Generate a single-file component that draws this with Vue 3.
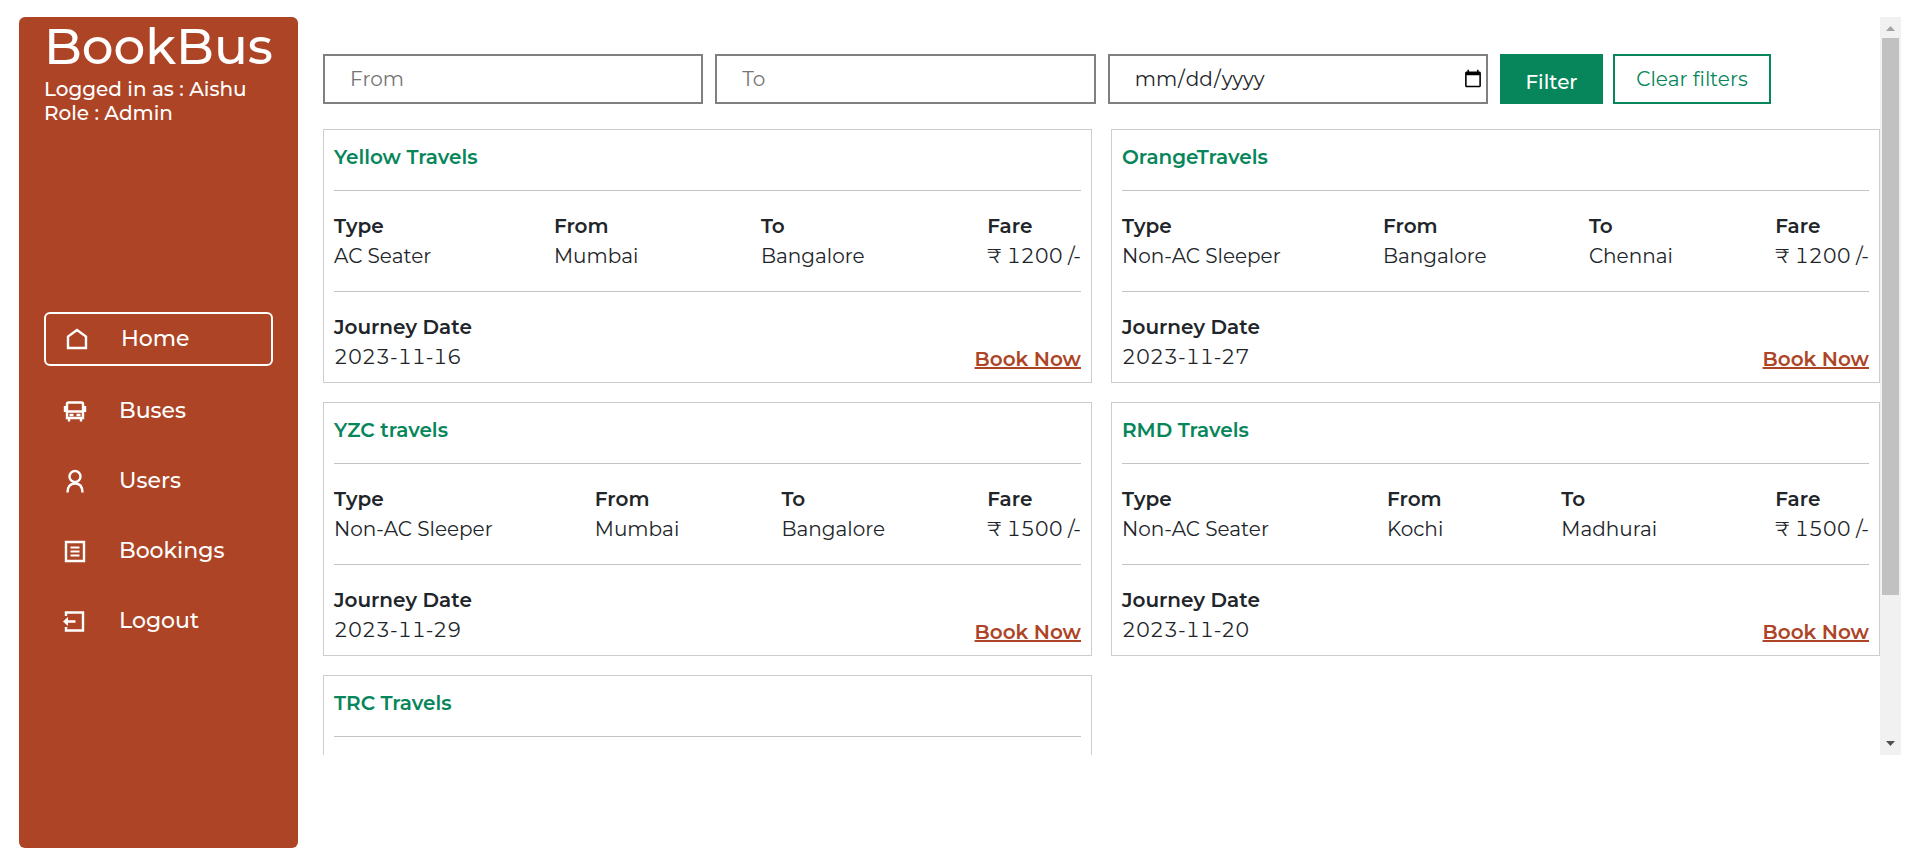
<script setup>
import { ref } from 'vue'

const from = ref('')
const to = ref('')
const date = ref('')

const links = [
  { icon: 'home', label: 'Home', active: true },
  { icon: 'bus', label: 'Buses' },
  { icon: 'user', label: 'Users' },
  { icon: 'list', label: 'Bookings' },
  { icon: 'logout', label: 'Logout' },
]

const buses = [
  { name: 'Yellow Travels', type: 'AC Seater', from: 'Mumbai', to: 'Bangalore', fare: 1200, date: '2023-11-16' },
  { name: 'OrangeTravels', type: 'Non-AC Sleeper', from: 'Bangalore', to: 'Chennai', fare: 1200, date: '2023-11-27' },
  { name: 'YZC travels', type: 'Non-AC Sleeper', from: 'Mumbai', to: 'Bangalore', fare: 1500, date: '2023-11-29' },
  { name: 'RMD Travels', type: 'Non-AC Seater', from: 'Kochi', to: 'Madhurai', fare: 1500, date: '2023-11-20' },
  { name: 'TRC Travels' },
]

function clearFilters() {
  from.value = ''
  to.value = ''
  date.value = ''
}
</script>

<template>
  <div class="layout">
    <aside class="sidebar">
      <h1 class="brand">BookBus</h1>
      <p class="info">Logged in as : Aishu</p>
      <p class="info">Role : Admin</p>
      <nav class="nav">
        <a v-for="l in links" :key="l.label" href="#" class="link" :class="{ active: l.active }">
          <svg class="icon" viewBox="0 0 26 26" fill="none" stroke="currentColor" stroke-width="2.4" aria-hidden="true">
            <path v-if="l.icon === 'home'" d="M4 22V10.5L13 4l9 6.5V22Z" />
            <template v-else-if="l.icon === 'bus'">
              <path d="M5 20V6q0-1.500 1.500-1.500h13q1.500 0 1.500 1.500v14ZM5 13.500h16" />
              <path d="M3 8v6M23 8v6M7 20v3.500M19 20v3.500" />
              <path d="M7.500 17h4M14.500 17h4" />
            </template>
            <template v-else-if="l.icon === 'user'">
              <circle cx="13" cy="8.5" r="5.5" />
              <path d="M5.500 24.500q0-9 7.500-9t7.500 9" />
            </template>
            <template v-else-if="l.icon === 'list'">
              <path d="M4 4h18v19H4Z" />
              <path d="M8.500 9.500h9M8.500 13.500h9M8.500 17.500h9" stroke-width="2" />
            </template>
            <template v-else>
              <path d="M4 8V4.500h17v18H4V19M5 13.500h8.500" />
              <path d="M6 9v9l-5-4.500Z" fill="currentColor" stroke="none" />
            </template>
          </svg>
          <span>{{ l.label }}</span>
        </a>
      </nav>
    </aside>

    <div class="panel">
      <main class="content">
        <form class="filters" @submit.prevent>
          <input v-model="from" class="field" type="text" placeholder="From" aria-label="From" />
          <input v-model="to" class="field" type="text" placeholder="To" aria-label="To" />
          <input v-model="date" class="field date" type="date" aria-label="Journey date" />
          <div class="actions">
            <button class="btn solid" type="submit">Filter</button>
            <button class="btn" type="button" @click="clearFilters">Clear filters</button>
          </div>
        </form>

        <section class="cards">
          <article v-for="b in buses" :key="b.name" class="card">
            <h2 class="name">{{ b.name }}</h2>
            <dl v-if="b.type" class="details">
              <div><dt>Type</dt><dd>{{ b.type }}</dd></div>
              <div><dt>From</dt><dd>{{ b.from }}</dd></div>
              <div><dt>To</dt><dd>{{ b.to }}</dd></div>
              <div><dt>Fare</dt><dd>₹ {{ b.fare }} /-</dd></div>
            </dl>
            <div v-if="b.date" class="footer">
              <dl class="journey">
                <dt>Journey Date</dt>
                <dd>{{ b.date }}</dd>
              </dl>
              <a href="#" class="book">Book Now</a>
            </div>
          </article>
        </section>
      </main>
      <div class="scrollbar" aria-hidden="true">
        <svg class="arrow up" viewBox="0 0 21 21"><path d="M6 14l4.500-5 4.500 5z" /></svg>
        <div class="track"><div class="thumb"></div></div>
        <svg class="arrow" viewBox="0 0 21 21"><path d="M6 7l4.500 5 4.500-5z" /></svg>
      </div>
    </div>
  </div>
</template>

<style>
body {
  margin: 0;
  background: #fff;
}
</style>

<style scoped>
.layout,
.layout * {
  box-sizing: border-box;
}
.layout {
  display: flex;
  gap: 25px;
  height: 100vh;
  padding: 17px 19px 15px;
  font-family: Montserrat, Inter, "Noto Sans", sans-serif;
  font-size: 20px;
  line-height: 30px;
  color: #212529;
}
.sidebar {
  flex: none;
  display: flex;
  flex-direction: column;
  width: 279px;
  padding: 0 25px 13px;
  border-radius: 6px;
  background: #ad4426;
  color: #fff;
  font-weight: 500;
}
.brand {
  margin: 0;
  font-size: 50px;
  font-weight: 500;
  line-height: 60px;
}
.info {
  margin: 0;
  line-height: 24px;
}
.nav {
  display: flex;
  flex-direction: column;
  gap: 16px;
  margin: auto 0;
}
.link {
  display: flex;
  align-items: center;
  gap: 31px;
  height: 54px;
  padding: 0 18px;
  color: #fff;
  font-size: 22px;
  text-decoration: none;
}
.link.active {
  margin-bottom: 2px;
  border: 2px solid #fff;
  border-radius: 6px;
}
.icon {
  flex: none;
  width: 26px;
  height: 26px;
}
.panel {
  flex: 1;
  display: flex;
  min-width: 0;
  height: calc(100vh - 125px);
}
.content {
  flex: 1;
  min-width: 0;
  overflow-y: auto;
  scrollbar-width: none;
}
.scrollbar {
  flex: none;
  display: flex;
  flex-direction: column;
  width: 21px;
  background: #f1f1f1;
}
.arrow {
  flex: none;
  width: 21px;
  height: 21px;
  fill: #505050;
}
.arrow.up {
  fill: #a3a3a3;
}
.track {
  flex: 1;
  padding: 0 2px;
}
.thumb {
  height: 80%;
  background: #c1c1c1;
}
.filters {
  display: grid;
  grid-template-columns: repeat(3, minmax(0, 1fr)) auto;
  gap: 12px;
  padding: 37px 109px 25px 0;
}
.field {
  width: 100%;
  height: 50px;
  padding: 0 25px;
  border: 2px solid #808080;
  border-radius: 0;
  background: #fff;
  color: #212529;
  font: inherit;
}
.field::placeholder {
  color: #757575;
}
.date {
  padding: 0 1px 0 24px;
}
.actions {
  display: flex;
  gap: 10px;
}
.btn {
  width: 158px;
  height: 50px;
  padding: 0;
  border: 2px solid #06865a;
  background: #fff;
  color: #06865a;
  font: inherit;
  cursor: pointer;
}
.btn.solid {
  width: 103px;
  padding-top: 6px;
  background: #06865a;
  color: #fff;
  font-weight: 500;
}
.cards {
  display: grid;
  grid-template-columns: repeat(2, minmax(0, 1fr));
  gap: 19px;
  padding-bottom: 11px;
}
.card {
  min-height: 254px;
  padding: 12px 10px 8px;
  border: 1px solid #cdcdcd;
}
.name {
  margin: 0;
  padding-bottom: 18px;
  border-bottom: 1px solid #c4c4c4;
  color: #06865a;
  font-size: 20px;
  font-weight: 600;
}
dl,
dd {
  margin: 0;
}
dd {
  font-variant-numeric: tabular-nums;
}
dt {
  font-weight: 600;
}
.details {
  display: flex;
  justify-content: space-between;
  padding: 20px 0;
  border-bottom: 1px solid #c4c4c4;
}
.footer {
  display: flex;
  align-items: flex-end;
  justify-content: space-between;
  padding-top: 20px;
}
.journey {
  padding-bottom: 2px;
}
.book {
  color: #ad4426;
  font-weight: 600;
  text-decoration: underline;
  text-decoration-thickness: 2px;
}
</style>
